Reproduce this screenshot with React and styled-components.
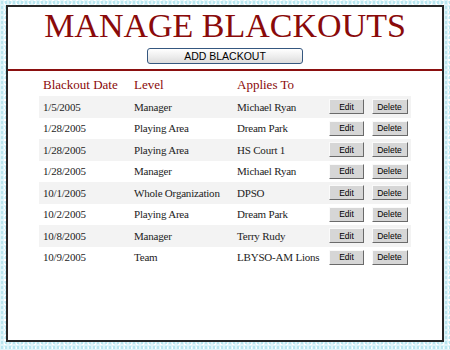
import React from "react";
import styled, { createGlobalStyle } from "styled-components";

const blackouts = [
  { date: "1/5/2005", level: "Manager", applies: "Michael Ryan" },
  { date: "1/28/2005", level: "Playing Area", applies: "Dream Park" },
  { date: "1/28/2005", level: "Playing Area", applies: "HS Court 1" },
  { date: "1/28/2005", level: "Manager", applies: "Michael Ryan" },
  { date: "10/1/2005", level: "Whole Organization", applies: "DPSO" },
  { date: "10/2/2005", level: "Playing Area", applies: "Dream Park" },
  { date: "10/8/2005", level: "Manager", applies: "Terry Rudy" },
  { date: "10/9/2005", level: "Team", applies: "LBYSO-AM Lions" },
];

const App = () => {
  return (
    <>
      <GlobalStyle />
      <Panel>
        <Header>
          <Title>MANAGE BLACKOUTS</Title>
          <AddButton>ADD BLACKOUT</AddButton>
        </Header>
        <Table>
          <HeadRow>
            <HeadCell>Blackout Date</HeadCell>
            <HeadCell>Level</HeadCell>
            <HeadCell>Applies To</HeadCell>
          </HeadRow>
          {blackouts.map((b, i) => (
            <Row key={i} $striped={i % 2 === 0}>
              <Cell>{b.date}</Cell>
              <Cell>{b.level}</Cell>
              <Cell>{b.applies}</Cell>
              <ActionCell>
                <SmallButton $w={35}>Edit</SmallButton>
              </ActionCell>
              <ActionCell>
                <SmallButton $w={36}>Delete</SmallButton>
              </ActionCell>
            </Row>
          ))}
        </Table>
      </Panel>
    </>
  );
};

export default App;

const GlobalStyle = createGlobalStyle`
  html, body {
    margin: 0;
    padding: 0;
  }
  body {
    width: 450px;
    height: 350px;
    overflow: hidden;
    background-color: #dff5fa;
    background-image:
      radial-gradient(#b9e6ef 1px, transparent 1.2px),
      radial-gradient(#ffffff 1px, transparent 1.2px);
    background-size: 4px 5px, 6px 4px;
    background-position: 0 0, 2px 2px;
  }
`;

const Panel = styled.div`
  box-sizing: border-box;
  width: 438px;
  height: 337px;
  margin: 5px 0 0 6px;
  background: #ffffff;
  border: 2px solid #262626;
  display: flex;
  flex-direction: column;
  align-items: center;
`;

const Header = styled.div`
  align-self: stretch;
  display: flex;
  flex-direction: column;
  align-items: center;
  padding-top: 2px;
  height: 60px;
  border-bottom: 2px solid #8b1010;
`;

const Title = styled.h1`
  margin: 0;
  font-family: "Liberation Serif", "Times New Roman", serif;
  font-weight: normal;
  font-size: 34px;
  line-height: 34px;
  color: #8a0a0a;
`;

const AddButton = styled.button`
  box-sizing: border-box;
  margin-top: 5px;
  width: 156px;
  height: 16px;
  padding: 0;
  border: 1.5px solid #35577f;
  border-radius: 3px;
  background: linear-gradient(#ffffff, #ebebeb 60%, #dcdcdc);
  font-family: "Liberation Sans", Arial, sans-serif;
  font-size: 10.5px;
  line-height: 12px;
  color: #000;
`;

const Table = styled.div`
  width: 372px;
  display: flex;
  flex-direction: column;
`;

const columns = "91px 103px 92px 43px 43px";

const HeadRow = styled.div`
  display: grid;
  grid-template-columns: ${columns};
  height: 25px;
  padding-top: 3px;
  box-sizing: border-box;
`;

const HeadCell = styled.div`
  padding-left: 4px;
  font-family: "Liberation Serif", "Times New Roman", serif;
  font-size: 13px;
  line-height: 22px;
  color: #8a0a0a;
  white-space: nowrap;
`;

const Row = styled.div`
  display: grid;
  grid-template-columns: ${columns};
  align-items: center;
  height: 21.5px;
  background: ${(p) => (p.$striped ? "#f3f3f3" : "#ffffff")};
`;

const Cell = styled.div`
  padding-left: 4px;
  font-family: "Liberation Serif", "Times New Roman", serif;
  font-size: 11px;
  letter-spacing: -0.2px;
  color: #1c1c1c;
  white-space: nowrap;
`;

const ActionCell = styled.div`
  display: flex;
  justify-content: center;
`;

const SmallButton = styled.button`
  box-sizing: border-box;
  width: ${(p) => p.$w}px;
  height: 15px;
  padding: 0;
  background: #d6d6d6;
  border: 1px solid;
  border-color: #fafafa #6a6a6a #6a6a6a #fafafa;
  font-family: "Liberation Sans", Tahoma, sans-serif;
  font-size: 8.5px;
  line-height: 12px;
  color: #000;
`;
